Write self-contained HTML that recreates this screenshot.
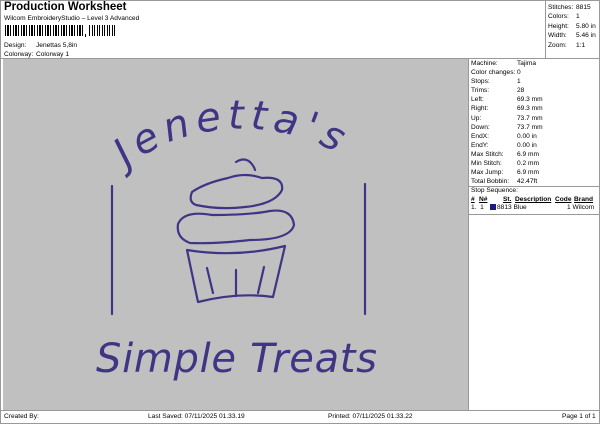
<!DOCTYPE html>
<html><head><meta charset="utf-8"><style>
*{margin:0;padding:0;box-sizing:border-box}
body{width:600px;height:424px;background:#fff;position:relative;overflow:hidden;font-family:"Liberation Sans",sans-serif;color:#000}
.a{position:absolute;white-space:nowrap}
.s{font-size:6.6px}
</style></head><body>
<div class="a" style="left:0;top:0;width:600px;height:424px;border:1px solid #999"></div>
<div class="a" style="left:4px;top:1px;font-size:11.5px;font-weight:bold">Production Worksheet</div>
<div class="a s" style="left:4px;top:15px">Wilcom EmbroideryStudio – Level 3 Advanced</div>
<div class="a" style="left:5px;top:25px;width:78px;height:11px;background:repeating-linear-gradient(90deg,#000 0 1px,#fff 1px 2px,#000 2px 4px,#fff 4px 5px,#000 5px 6px,#fff 6px 8px)"></div>
<div class="a" style="left:85px;top:34px;width:1px;height:3px;background:#000"></div>
<div class="a" style="left:89px;top:25px;width:26px;height:11px;background:repeating-linear-gradient(90deg,#000 0 1px,#fff 1px 3px,#000 3px 4px,#fff 4px 5px)"></div>
<div class="a s" style="left:4px;top:42px">Design:</div><div class="a s" style="left:36px;top:42px">Jenettas 5,8in</div>
<div class="a s" style="left:4px;top:51px">Colorway:</div><div class="a s" style="left:36px;top:51px">Colorway 1</div>
<div class="a" style="left:545px;top:0;width:1px;height:58px;background:#999"></div>
<div class="a s" style="left:548px;top:3px;line-height:9.4px">Stitches:<br>Colors:<br>Height:<br>Width:<br>Zoom:</div>
<div class="a s" style="left:576px;top:3px;line-height:9.4px">8815<br>1<br>5.80 in<br>5.46 in<br>1:1</div>
<div class="a" style="left:0;top:58px;width:600px;height:1px;background:#999"></div>
<div class="a" style="left:3px;top:59px;width:465px;height:351px;background:#c0c0c0"></div>
<div class="a" style="left:468px;top:59px;width:1px;height:351px;background:#999"></div>
<div class="a s" style="left:471px;top:59px;line-height:9.1px">Machine:<br>Color changes:<br>Stops:<br>Trims:<br>Left:<br>Right:<br>Up:<br>Down:<br>EndX:<br>EndY:<br>Max Stitch:<br>Min Stitch:<br>Max Jump:<br>Total Bobbin:</div>
<div class="a s" style="left:517px;top:59px;line-height:9.1px">Tajima<br>0<br>1<br>28<br>69.3 mm<br>69.3 mm<br>73.7 mm<br>73.7 mm<br>0.00 in<br>0.00 in<br>6.9 mm<br>0.2 mm<br>6.9 mm<br>42.47ft</div>
<div class="a" style="left:469px;top:186px;width:131px;height:1px;background:#999"></div>
<div class="a s" style="left:471px;top:187px">Stop Sequence:</div>
<div class="a s" style="left:471px;top:196px;font-weight:bold;text-decoration:underline">#</div>
<div class="a s" style="left:479px;top:196px;font-weight:bold;text-decoration:underline">N#</div>
<div class="a s" style="left:503px;top:196px;font-weight:bold;text-decoration:underline">St.</div>
<div class="a s" style="left:515px;top:196px;font-weight:bold;text-decoration:underline">Description</div>
<div class="a s" style="left:555px;top:196px;font-weight:bold;text-decoration:underline">Code</div>
<div class="a s" style="left:574px;top:196px;font-weight:bold;text-decoration:underline">Brand</div>
<div class="a s" style="left:471px;top:204px">1.&nbsp; 1</div>
<div class="a" style="left:490px;top:204px;width:6px;height:6px;background:#1a1a80"></div>
<div class="a s" style="left:497px;top:204px">8813 Blue</div>
<div class="a s" style="left:567px;top:204px">1 Wilcom</div>
<div class="a" style="left:469px;top:214px;width:131px;height:1px;background:#999"></div>
<div class="a" style="left:0;top:410px;width:600px;height:1px;background:#999"></div>
<div class="a s" style="left:4px;top:413px">Created By:</div>
<div class="a s" style="left:148px;top:413px">Last Saved: 07/11/2025 01.33.19</div>
<div class="a s" style="left:328px;top:413px">Printed: 07/11/2025 01.33.22</div>
<div class="a s" style="left:562px;top:413px">Page 1 of 1</div>
<svg class="a" style="left:0;top:0" width="600" height="424" viewBox="0 0 600 424">
<defs><path id="arc" d="M127,168 A150,110 0 0 1 357,168"/></defs>
<g fill="none" stroke="#3f3585" stroke-width="2.2" stroke-linecap="round" stroke-linejoin="round">
<line x1="112" y1="186" x2="112" y2="314"/>
<line x1="365" y1="184" x2="365" y2="314"/>
<path d="M187,250 Q236,258 285,246 L273,297 Q238,292 198,302 Z"/>
<line x1="207" y1="268" x2="213" y2="293"/>
<line x1="236" y1="270" x2="236" y2="296"/>
<line x1="264" y1="267" x2="258" y2="293"/>
<path d="M190,243 Q176,238 178,224 Q184,210 212,215 Q250,215 270,211 Q292,208 294,225 Q290,240 250,240 Q215,244 190,243 Z"/>
<path d="M196,205 Q188,202 192,192 Q205,183 228,178 Q245,172 262,178 Q284,176 282,190 Q275,204 245,207 Q220,210 196,205 Z"/>
<path d="M236,162 Q244,157 250,162 Q254,166 255,170"/>
</g>
<text font-family="'DejaVu Sans',sans-serif" font-weight="200" font-style="italic" font-size="40" fill="#3f3585" letter-spacing="6"><textPath href="#arc" startOffset="0%">Jenetta's</textPath></text>
<text x="96" y="372" font-family="'DejaVu Sans',sans-serif" font-weight="200" font-style="italic" font-size="40" fill="#3f3585" letter-spacing="1" textLength="282">Simple Treats</text>
</svg>
</body></html>
